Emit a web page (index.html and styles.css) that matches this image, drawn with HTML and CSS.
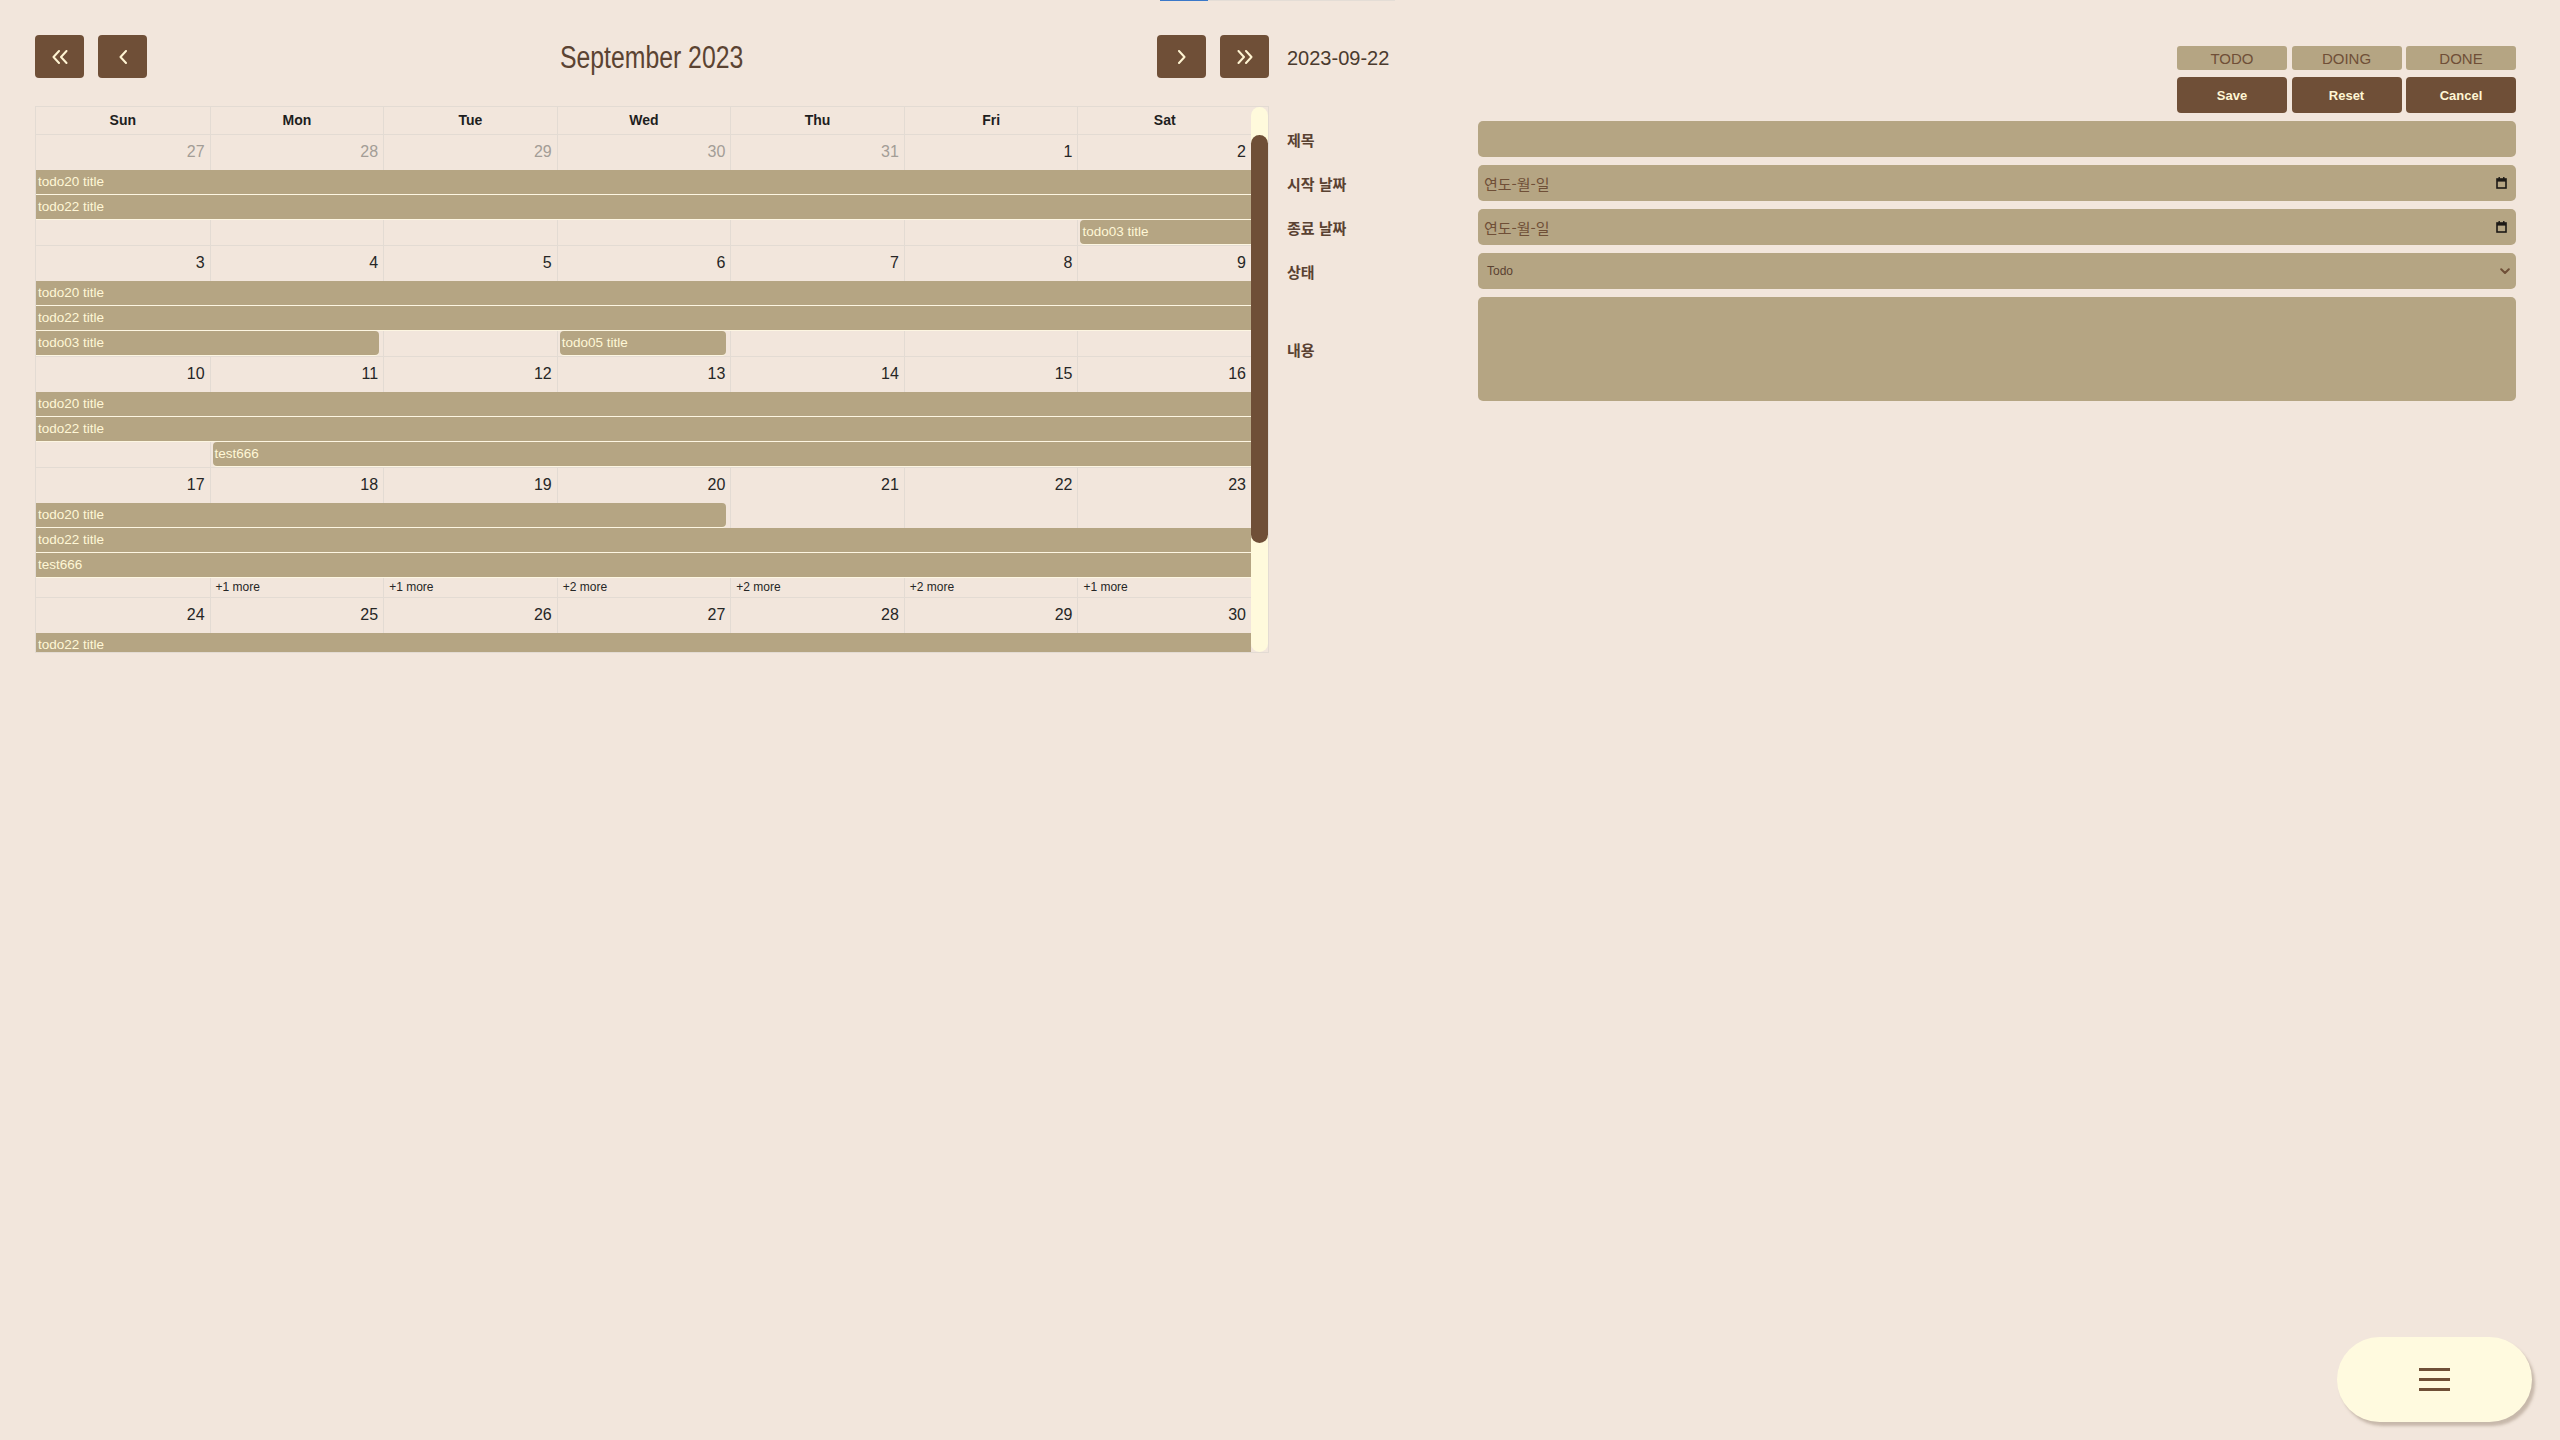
FILE: index.html
```html
<!DOCTYPE html>
<html lang="ko">
<head>
<meta charset="utf-8">
<title>Calendar</title>
<link rel="stylesheet" href="styles.css">
</head>
<body>
<div class="topline"><span class="topline-blue"></span><span class="topline-gray"></span></div>
<div class="page">
  <section class="cal-col">
    <div class="nav">
      <div class="nav-group">
        <button class="nav-btn" type="button"><svg width="18" height="14" viewBox="0 0 18 14"><polyline points="8,1 2.5,7 8,13" /><polyline points="15.5,1 10,7 15.5,13" /></svg></button>
        <button class="nav-btn" type="button"><svg width="10" height="14" viewBox="0 0 10 14"><polyline points="8,1 2.5,7 8,13" /></svg></button>
      </div>
      <h1 class="month-title"><span class="month-text">September 2023</span></h1>
      <div class="nav-group">
        <button class="nav-btn" type="button"><svg width="10" height="14" viewBox="0 0 10 14"><polyline points="2,1 7.5,7 2,13" /></svg></button>
        <button class="nav-btn" type="button"><svg width="18" height="14" viewBox="0 0 18 14"><polyline points="2.5,1 8,7 2.5,13" /><polyline points="10,1 15.5,7 10,13" /></svg></button>
      </div>
    </div>

    <div class="cal-frame">
      <div class="cal">
        <div class="cal-head">
          <div class="head-cell">Sun</div><div class="head-cell">Mon</div><div class="head-cell">Tue</div><div class="head-cell">Wed</div><div class="head-cell">Thu</div><div class="head-cell">Fri</div><div class="head-cell">Sat</div>
        </div>

        <div class="week">
          <div class="bg c1"></div><div class="bg c2"></div><div class="bg c3"></div><div class="bg c4"></div><div class="bg c5"></div><div class="bg c6"></div><div class="bg c7"></div>
          <div class="num c1 off">27</div><div class="num c2 off">28</div><div class="num c3 off">29</div><div class="num c4 off">30</div><div class="num c5 off">31</div><div class="num c6">1</div><div class="num c7">2</div>
          <div class="ev r2 s1 e8">todo20 title</div>
          <div class="ev r3 s1 e8">todo22 title</div>
          <div class="ev r4 s7 e8 start">todo03 title</div>
        </div>

        <div class="week">
          <div class="bg c1"></div><div class="bg c2"></div><div class="bg c3"></div><div class="bg c4"></div><div class="bg c5"></div><div class="bg c6"></div><div class="bg c7"></div>
          <div class="num c1">3</div><div class="num c2">4</div><div class="num c3">5</div><div class="num c4">6</div><div class="num c5">7</div><div class="num c6">8</div><div class="num c7">9</div>
          <div class="ev r2 s1 e8">todo20 title</div>
          <div class="ev r3 s1 e8">todo22 title</div>
          <div class="ev r4 s1 e3 end">todo03 title</div>
          <div class="ev r4 s4 e5 start end">todo05 title</div>
        </div>

        <div class="week">
          <div class="bg c1"></div><div class="bg c2"></div><div class="bg c3"></div><div class="bg c4"></div><div class="bg c5"></div><div class="bg c6"></div><div class="bg c7"></div>
          <div class="num c1">10</div><div class="num c2">11</div><div class="num c3">12</div><div class="num c4">13</div><div class="num c5">14</div><div class="num c6">15</div><div class="num c7">16</div>
          <div class="ev r2 s1 e8">todo20 title</div>
          <div class="ev r3 s1 e8">todo22 title</div>
          <div class="ev r4 s2 e8 start">test666</div>
        </div>

        <div class="week week-more">
          <div class="bg c1"></div><div class="bg c2"></div><div class="bg c3"></div><div class="bg c4"></div><div class="bg c5"></div><div class="bg c6"></div><div class="bg c7"></div>
          <div class="num c1">17</div><div class="num c2">18</div><div class="num c3">19</div><div class="num c4">20</div><div class="num c5">21</div><div class="num c6">22</div><div class="num c7">23</div>
          <div class="ev r2 s1 e5 end">todo20 title</div>
          <div class="ev r3 s1 e8">todo22 title</div>
          <div class="ev r4 s1 e8">test666</div>
          <div class="more c2">+1 more</div><div class="more c3">+1 more</div><div class="more c4">+2 more</div><div class="more c5">+2 more</div><div class="more c6">+2 more</div><div class="more c7">+1 more</div>
        </div>

        <div class="week">
          <div class="bg c1"></div><div class="bg c2"></div><div class="bg c3"></div><div class="bg c4"></div><div class="bg c5"></div><div class="bg c6"></div><div class="bg c7"></div>
          <div class="num c1">24</div><div class="num c2">25</div><div class="num c3">26</div><div class="num c4">27</div><div class="num c5">28</div><div class="num c6">29</div><div class="num c7">30</div>
          <div class="ev r2 s1 e8">todo22 title</div>
        </div>
      </div>
      <div class="scrollbar"><div class="thumb"></div></div>
    </div>
  </section>

  <section class="side">
    <div class="side-top">
      <div class="cur-date">2023-09-22</div>
      <div class="actions">
        <div class="status-row">
          <button class="status-btn" type="button">TODO</button>
          <button class="status-btn" type="button">DOING</button>
          <button class="status-btn" type="button">DONE</button>
        </div>
        <div class="btn-row">
          <button class="act-btn" type="button">Save</button>
          <button class="act-btn" type="button">Reset</button>
          <button class="act-btn" type="button">Cancel</button>
        </div>
      </div>
    </div>

    <div class="form">
      <div class="label">제목</div>
      <div class="field"></div>
      <div class="label">시작 날짜</div>
      <div class="field field-date"><span class="ph">연도-월-일</span><svg class="cal-icon" width="11" height="12" viewBox="0 0 11 12"><rect x="1" y="2" width="9" height="9" fill="none" stroke="#1d1a16" stroke-width="1.6"/><rect x="1" y="2" width="9" height="2.6" fill="#1d1a16"/><rect x="2.5" y="0" width="1.4" height="2.5" fill="#1d1a16"/><rect x="7.1" y="0" width="1.4" height="2.5" fill="#1d1a16"/></svg></div>
      <div class="label">종료 날짜</div>
      <div class="field field-date"><span class="ph">연도-월-일</span><svg class="cal-icon" width="11" height="12" viewBox="0 0 11 12"><rect x="1" y="2" width="9" height="9" fill="none" stroke="#1d1a16" stroke-width="1.6"/><rect x="1" y="2" width="9" height="2.6" fill="#1d1a16"/><rect x="2.5" y="0" width="1.4" height="2.5" fill="#1d1a16"/><rect x="7.1" y="0" width="1.4" height="2.5" fill="#1d1a16"/></svg></div>
      <div class="label">상태</div>
      <div class="field field-select"><span class="sel-text">Todo</span><svg class="chev" width="10" height="7" viewBox="0 0 10 7"><polyline points="1.2,1.2 5,5 8.8,1.2" /></svg></div>
      <div class="label">내용</div>
      <div class="field field-area"></div>
    </div>
  </section>
</div>

<button class="fab" type="button" aria-label="menu"><svg width="31" height="23" viewBox="0 0 31 23"><rect x="0" y="0" width="31" height="3" fill="#6f4f37"/><rect x="0" y="10" width="31" height="3" fill="#6f4f37"/><rect x="0" y="20" width="31" height="3" fill="#6f4f37"/></svg></button>
</body>
</html>
```

FILE: styles.css
```css
* { box-sizing: border-box; }

html, body {
  margin: 0;
  padding: 0;
  background: #f2e6dc;
  font-family: "Liberation Sans", "Noto Sans CJK KR", sans-serif;
  color: #222;
}

.topline {
  display: flex;
  height: 1px;
  margin-left: 1160px;
}
.topline-blue { width: 48px; background: #3a78c9; }
.topline-gray { width: 187px; background: #e4ddd6; }

.page {
  display: flex;
  gap: 18px;
  padding: 34px 44px 0 35px;
}

/* ---------- calendar column ---------- */
.cal-col {
  width: 1234px;
  flex: none;
}

.nav {
  display: flex;
  align-items: center;
  height: 43px;
}
.nav-group {
  display: flex;
  gap: 14px;
}
.nav-btn {
  width: 49px;
  height: 43px;
  border: none;
  border-radius: 4px;
  background: #6f4f37;
  display: flex;
  align-items: center;
  justify-content: center;
  padding: 0;
}
.nav-btn svg polyline {
  fill: none;
  stroke: #fff4d2;
  stroke-width: 2;
  stroke-linecap: round;
  stroke-linejoin: round;
}
.month-title {
  flex: 1;
  margin: 0;
  text-align: center;
  font-weight: normal;
  font-size: 31px;
  line-height: 43px;
  color: #5b4332;
  padding-top: 2px;
}
.month-text {
  display: inline-block;
  transform: scaleX(0.8);
}

.cal-frame {
  margin-top: 28px;
  height: 547px;
  display: flex;
  border: 1px solid #e3dbd3;
}
.cal {
  flex: 1;
  overflow: hidden;
}
.cal-head {
  display: grid;
  grid-template-columns: repeat(7, 1fr);
  height: 27px;
}
.head-cell {
  text-align: center;
  line-height: 27px;
  font-weight: bold;
  font-size: 14px;
  color: #1e1e1e;
  border-left: 1px solid #e3dbd3;
}
.head-cell:first-child { border-left: none; }

.week {
  display: grid;
  grid-template-columns: repeat(7, 1fr);
  grid-template-rows: 35px repeat(3, 25px);
  border-top: 1px solid #e3dbd3;
}
.week-more {
  grid-template-rows: 35px repeat(3, 25px) 19px;
}

.bg { grid-row: 1 / -1; border-left: 1px solid #e3dbd3; }
.bg.c1 { border-left: none; }

.c1 { grid-column: 1; }
.c2 { grid-column: 2; }
.c3 { grid-column: 3; }
.c4 { grid-column: 4; }
.c5 { grid-column: 5; }
.c6 { grid-column: 6; }
.c7 { grid-column: 7; }

.num {
  grid-row: 1;
  text-align: right;
  padding-right: 5px;
  line-height: 34px;
  font-size: 16px;
  color: #262626;
}
.num.off { color: #a39d96; }

.ev {
  height: 24px;
  margin-bottom: 1px;
  box-shadow: 0 1px 0 #fdf6e2;
  background: #b5a583;
  color: #fff7d6;
  font-size: 13.5px;
  line-height: 24px;
  padding-left: 2px;
  white-space: nowrap;
  overflow: hidden;
}
.ev.start { margin-left: 3px; border-top-left-radius: 4px; border-bottom-left-radius: 4px; }
.ev.end { margin-right: 4px; border-top-right-radius: 4px; border-bottom-right-radius: 4px; }

.r2 { grid-row: 2; }
.r3 { grid-row: 3; }
.r4 { grid-row: 4; }

.s1 { grid-column-start: 1; }
.s2 { grid-column-start: 2; }
.s4 { grid-column-start: 4; }
.s7 { grid-column-start: 7; }
.e3 { grid-column-end: 3; }
.e5 { grid-column-end: 5; }
.e8 { grid-column-end: 8; }

.more {
  grid-row: 5;
  font-size: 12px;
  line-height: 19px;
  padding-left: 6px;
  color: #262626;
}

.scrollbar {
  width: 17px;
  flex: none;
  background: #fffadc;
  border-radius: 9px;
}
.thumb {
  margin-top: 28px;
  height: 408px;
  background: #6f4f37;
  border-radius: 9px;
}

/* ---------- side panel ---------- */
.side {
  flex: 1;
  min-width: 0;
}
.side-top {
  display: flex;
  justify-content: space-between;
  align-items: flex-start;
}
.cur-date {
  height: 43px;
  line-height: 43px;
  padding-top: 2px;
  font-size: 20px;
  color: #4a3a2e;
}
.actions {
  margin-top: 11px;
  display: flex;
  flex-direction: column;
  gap: 7px;
}
.status-row, .btn-row {
  display: flex;
  gap: 4.5px;
}
.status-btn {
  width: 110px;
  height: 24px;
  border: none;
  border-radius: 3px;
  background: #b5a583;
  color: #6f4f37;
  font-family: "Liberation Sans", sans-serif;
  font-size: 15px;
  padding: 0;
}
.act-btn {
  width: 110px;
  height: 36px;
  border: none;
  border-radius: 4px;
  background: #6f4f37;
  color: #fff6d4;
  font-family: "Liberation Sans", sans-serif;
  font-weight: bold;
  font-size: 13px;
  padding: 0;
}

.form {
  margin-top: 8px;
  display: grid;
  grid-template-columns: 191px 1fr;
  grid-template-rows: 36px 36px 36px 36px 104px;
  row-gap: 8px;
}
.label {
  display: flex;
  align-items: center;
  font-family: "Noto Sans CJK KR", sans-serif;
  font-weight: bold;
  font-size: 15px;
  color: #5a4232;
}
.field {
  background: #b5a583;
  border-radius: 5px;
  display: flex;
  align-items: center;
  justify-content: space-between;
}
.ph {
  padding-left: 6px;
  font-family: "Noto Sans CJK KR", sans-serif;
  font-size: 15px;
  color: #6f4f37;
}
.cal-icon { margin-right: 9px; }
.sel-text {
  padding-left: 9px;
  font-size: 12px;
  color: #5a4232;
}
.chev { margin-right: 6px; }
.chev polyline {
  fill: none;
  stroke: #6f4f37;
  stroke-width: 2;
  stroke-linecap: round;
  stroke-linejoin: round;
}

.fab {
  position: fixed;
  right: 28px;
  bottom: 18px;
  width: 195px;
  height: 85px;
  border: none;
  border-radius: 43px;
  background: #fffadf;
  box-shadow: 3px 4px 3px rgba(120, 100, 80, 0.35);
  display: flex;
  align-items: center;
  justify-content: center;
  padding: 0;
}
```
